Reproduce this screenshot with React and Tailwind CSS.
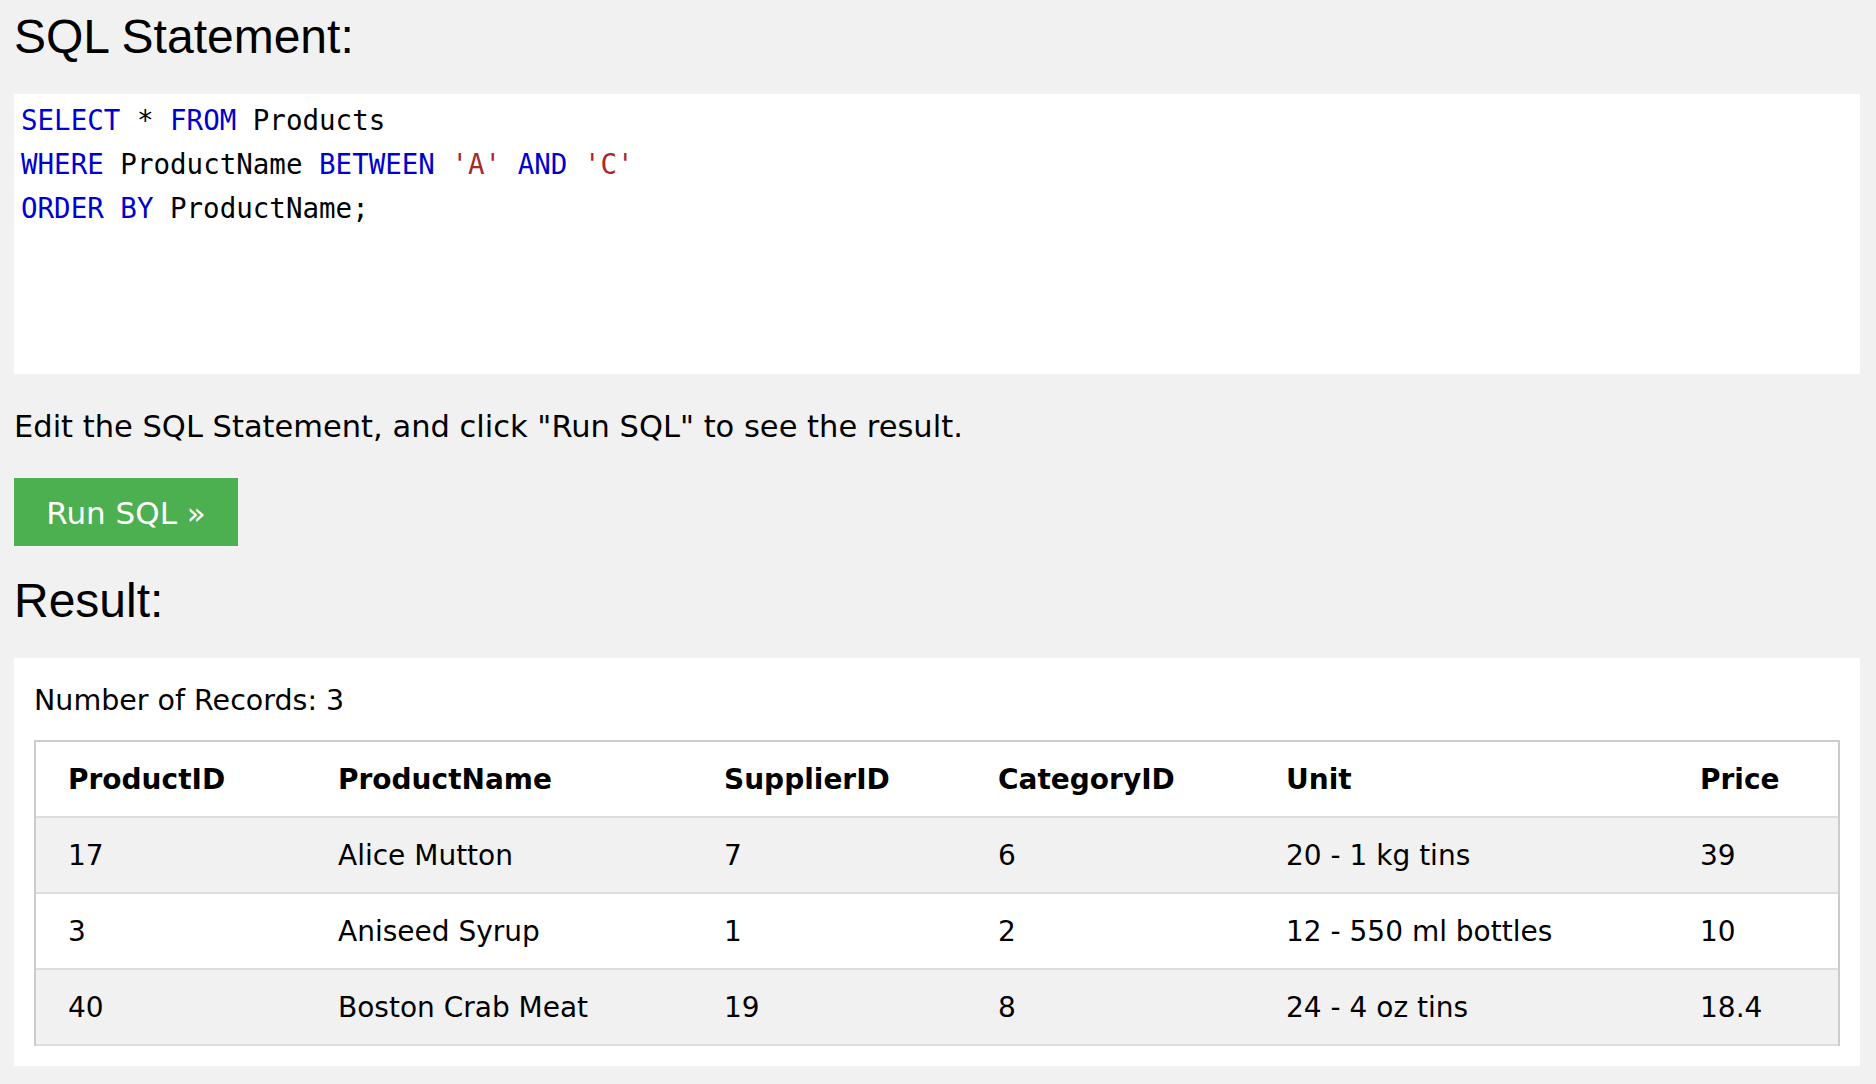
const rows = [
  ["17", "Alice Mutton", "7", "6", "20 - 1 kg tins", "39"],
  ["3", "Aniseed Syrup", "1", "2", "12 - 550 ml bottles", "10"],
  ["40", "Boston Crab Meat", "19", "8", "24 - 4 oz tins", "18.4"],
];

const heads = ["ProductID", "ProductName", "SupplierID", "CategoryID", "Unit", "Price"];

const cols = "grid grid-cols-[286px_386px_274px_288px_414px_154px]";

function Kw({ children }) {
  return <span className="text-[#0000cd]">{children}</span>;
}

function Str({ children }) {
  return <span className="text-[#a52a2a]">{children}</span>;
}

export default function App() {
  return (
    <div className="min-h-screen bg-[#f1f1f1] pl-[14px] pr-[16px] pt-[9px] pb-[18px] text-black font-['DejaVu_Sans',Verdana,sans-serif] text-[30px] leading-[45px]">
      <h2 className="font-['Liberation_Sans',Arial,sans-serif] text-[48px] leading-[56px] font-normal mb-[29px]">SQL Statement:</h2>

      <div className="bg-white h-[280px] pl-[7px] pt-[4px] font-['DejaVu_Sans_Mono',monospace] text-[27.5px] leading-[44px] whitespace-pre">
        <div><Kw>SELECT</Kw> * <Kw>FROM</Kw> Products</div>
        <div><Kw>WHERE</Kw> ProductName <Kw>BETWEEN</Kw> <Str>'A'</Str> <Kw>AND</Kw> <Str>'C'</Str></div>
        <div><Kw>ORDER BY</Kw> ProductName;</div>
      </div>

      <p className="mt-[30px] text-[30.5px]">Edit the SQL Statement, and click "Run SQL" to see the result.</p>

      <button className="mt-[29px] h-[68px] w-[224px] bg-[#4caf50] text-white text-[31px] flex items-center justify-center pt-[2px] leading-[36px]">
        Run SQL »
      </button>

      <h2 className="mt-[27px] font-['Liberation_Sans',Arial,sans-serif] text-[48px] leading-[56px] font-normal">Result:</h2>

      <div className="mt-[29px] bg-white p-[20px] text-[28px]">
        <div className="mb-[17px] text-[28.5px]">Number of Records: 3</div>
        <div className="border-t-2 border-x-2 border-[#ccc]">
          <div className={`${cols} h-[76px] items-center border-b-2 border-[#ddd] bg-white font-bold`}>
            {heads.map((h, i) => (
              <div key={h} className={i === 0 ? "pl-[32px]" : "pl-[16px]"}>{h}</div>
            ))}
          </div>
          {rows.map((r, ri) => (
            <div key={r[0]} className={`${cols} h-[76px] items-center border-b-2 border-[#ddd] ${ri % 2 === 0 ? "bg-[#f1f1f1]" : "bg-white"}`}>
              {r.map((c, i) => (
                <div key={i} className={i === 0 ? "pl-[32px]" : "pl-[16px]"}>{c}</div>
              ))}
            </div>
          ))}
        </div>
      </div>
    </div>
  );
}
